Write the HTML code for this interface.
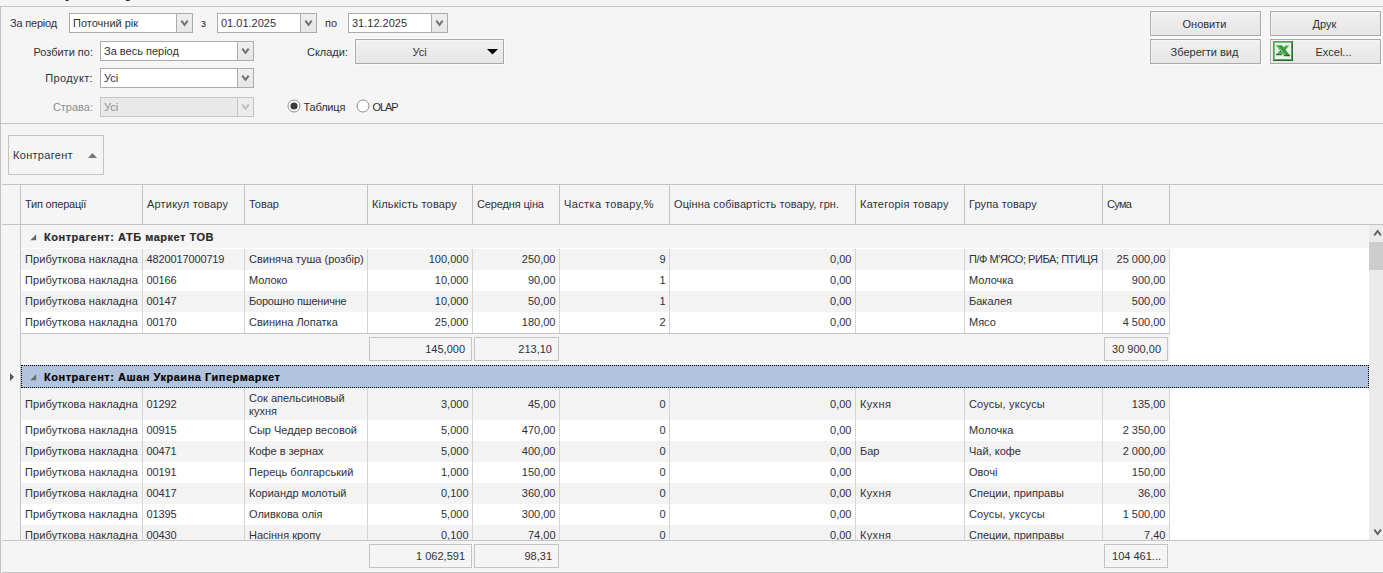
<!DOCTYPE html>
<html lang="uk"><head><meta charset="utf-8"><title>Звіт про закупівлі</title>
<style>
html,body{margin:0;padding:0;}
body{width:1383px;height:573px;overflow:hidden;position:relative;background:#f5f5f5;font-family:"Liberation Sans",sans-serif;font-size:11px;color:#30303a;}
div,span{box-sizing:border-box;}
.a{position:absolute;white-space:nowrap;}
.t{position:absolute;white-space:nowrap;line-height:13px;height:13px;}
.cb{position:absolute;height:20px;border:1px solid #ababab;background:#fff;}
.cb .tx{position:absolute;left:3px;top:3px;line-height:13px;}
.cb .dd{position:absolute;right:0;top:0;bottom:0;width:16px;border-left:1px solid #ababab;background:linear-gradient(#efefef,#e6e6e6);}
.cb .dd svg{position:absolute;left:3px;top:5px;}
.cb.dis{background:#e9e9e9;border-color:#c4c4c4;color:#8c8c8c;}
.cb.dis .dd{border-color:#c4c4c4;background:#ececec;}
.btn{position:absolute;border:1px solid #a8a8a8;background:linear-gradient(#f0f0f0,#e6e6e6);box-shadow:inset 1px 1px 0 0 rgba(255,255,255,.45),0 0 0 1px rgba(255,255,255,.55);text-align:center;}
.btn span{position:absolute;left:0;right:2px;text-align:center;line-height:13px;}
.hl{position:absolute;height:1px;background:#c4c4c4;}
.vl{position:absolute;width:1px;background:#c4c4c4;}
.hd{position:absolute;top:185px;height:39px;line-height:39px;padding-left:5px;white-space:nowrap;}
.row{position:absolute;left:21px;width:1148px;}
.c{position:absolute;top:0;height:100%;white-space:nowrap;overflow:hidden;}
.c span{position:absolute;left:4px;right:3.5px;line-height:13px;}
.c.r span{text-align:right;}
.c.k1 span{letter-spacing:0.1px;}
.c.k2 span{letter-spacing:-0.13px;left:3.5px;}
.grp{position:absolute;left:21px;width:1348px;height:23px;font-weight:bold;}
.grp .tx{position:absolute;left:23px;top:6px;line-height:13px;letter-spacing:0.52px;-webkit-text-stroke:0.2px currentColor;}
.sum{position:absolute;height:24px;border:1px solid #c4c4c4;background:#f5f5f5;}
.sum span{position:absolute;right:6px;top:5px;line-height:13px;}
</style></head><body>

<div class="a" style="left:6.4px;top:-20.6px;font-size:20px;font-weight:bold;line-height:23px;color:#222;">Звіт про закупівлі</div>
<div class="hl" style="left:0;top:6px;width:1383px;background:#c2c2c2"></div>
<div class="vl" style="left:0;top:6px;height:567px;background:#c2c2c2"></div>
<div class="t" style="left:10px;top:17px;letter-spacing:-0.2px">За період</div>
<div class="cb" style="left:69px;top:13px;width:124px;"><span class="tx">Поточний рік</span><span class="dd"><svg width="9" height="8" viewBox="0 0 9 8"><path d="M1.3 1.7 L4.5 5.9 L7.7 1.7" fill="none" stroke="#707070" stroke-width="2"/></svg></span></div>
<div class="t" style="left:201px;top:17px;">з</div>
<div class="cb" style="left:217px;top:13px;width:100px;"><span class="tx">01.01.2025</span><span class="dd"><svg width="9" height="8" viewBox="0 0 9 8"><path d="M1.3 1.7 L4.5 5.9 L7.7 1.7" fill="none" stroke="#707070" stroke-width="2"/></svg></span></div>
<div class="t" style="left:325px;top:17px;">по</div>
<div class="cb" style="left:348px;top:13px;width:100px;"><span class="tx">31.12.2025</span><span class="dd"><svg width="9" height="8" viewBox="0 0 9 8"><path d="M1.3 1.7 L4.5 5.9 L7.7 1.7" fill="none" stroke="#707070" stroke-width="2"/></svg></span></div>
<div class="t" style="left:0;width:93px;text-align:right;top:46px;">Розбити по:</div>
<div class="cb" style="left:100px;top:41px;width:154px;"><span class="tx">За весь період</span><span class="dd"><svg width="9" height="8" viewBox="0 0 9 8"><path d="M1.3 1.7 L4.5 5.9 L7.7 1.7" fill="none" stroke="#707070" stroke-width="2"/></svg></span></div>
<div class="t" style="left:250px;width:98px;text-align:right;top:46px;">Склади:</div>
<div class="btn" style="left:355px;top:39px;width:149px;height:25px;"><span style="top:6px;right:20px">Усі</span><svg style="position:absolute;right:5px;top:9px" width="11" height="6" viewBox="0 0 11 6"><path d="M0 0 H11 L5.5 5.5 Z" fill="#000"/></svg></div>
<div class="t" style="left:0;width:93px;text-align:right;top:72px;letter-spacing:0.35px">Продукт:</div>
<div class="cb" style="left:100px;top:68px;width:154px;"><span class="tx">Усі</span><span class="dd"><svg width="9" height="8" viewBox="0 0 9 8"><path d="M1.3 1.7 L4.5 5.9 L7.7 1.7" fill="none" stroke="#707070" stroke-width="2"/></svg></span></div>
<div class="t" style="left:0;width:93px;text-align:right;top:101px;color:#8c8c8c">Страва:</div>
<div class="cb dis" style="left:100px;top:97px;width:154px;"><span class="tx">Усі</span><span class="dd"><svg width="9" height="8" viewBox="0 0 9 8"><path d="M1.3 1.7 L4.5 5.9 L7.7 1.7" fill="none" stroke="#bdbdbd" stroke-width="2"/></svg></span></div>
<svg class="a" style="left:286.6px;top:99.4px" width="14" height="14" viewBox="0 0 14 14"><circle cx="7" cy="7" r="6" fill="#fff" stroke="#8e8e8e" stroke-width="1"/><circle cx="7" cy="7" r="3.6" fill="#3a3a3a"/></svg>
<div class="t" style="left:303.6px;top:101px;letter-spacing:-0.2px">Таблиця</div>
<svg class="a" style="left:355.6px;top:99.4px" width="14" height="14" viewBox="0 0 14 14"><circle cx="7" cy="7" r="6" fill="#fff" stroke="#8e8e8e" stroke-width="1"/></svg>
<div class="t" style="left:372.4px;top:101px;letter-spacing:-1.05px">OLAP</div>
<div class="btn" style="left:1150px;top:11px;width:111px;height:25px;"><span style="top:6px;">Оновити</span></div>
<div class="btn" style="left:1270px;top:11px;width:111px;height:25px;"><span style="top:6px;">Друк</span></div>
<div class="btn" style="left:1150px;top:39px;width:111px;height:25px;"><span style="top:6px;">Зберегти вид</span></div>
<div class="btn" style="left:1270px;top:39px;width:111px;height:25px;"><span style="top:6px;left:18px;">Excel...</span></div>
<svg class="a" style="left:1273px;top:41px" width="20" height="20" viewBox="0 0 20 20">
<rect x="0" y="0" width="20" height="20" fill="#2f6a2f"/>
<rect x="0" y="0" width="19" height="19" fill="#58a258"/>
<rect x="1" y="1" width="17" height="17" fill="#7dbb7d"/>
<rect x="2" y="2" width="16" height="16" fill="#fff"/>
<rect x="2.5" y="2.5" width="15" height="15" fill="#e6f2e6"/>
<path d="M12.4 4.4 H16.2 L8.6 13.6 H2.9 Z" fill="#55a855"/>
<path d="M2.8 4.3 H8.8 L17.2 14.6 H11 Z" fill="#3f983f"/>
<path d="M4.2 4.6 L12.6 14.4" stroke="#b4e2b4" stroke-width="0.8" fill="none"/>
<path d="M2.9 13.7 H8.6 M11 14.7 H17.2" stroke="#1d4d1d" stroke-width="1" fill="none"/>
</svg>
<div class="hl" style="left:1px;top:123px;width:1382px;"></div>
<div class="a" style="left:8px;top:135px;width:96px;height:40px;border:1px solid #c4c4c4;background:#f5f5f5;"><span class="t" style="left:4px;top:13px;letter-spacing:0.3px">Контрагент</span><svg style="position:absolute;left:79px;top:17px" width="9" height="5" viewBox="0 0 9 5"><path d="M0 5 L4.5 0 L9 5 Z" fill="#777"/></svg></div>
<div class="hl" style="left:2px;top:184px;width:1381px;"></div>
<div class="hl" style="left:2px;top:224px;width:1381px;"></div>
<div class="vl" style="left:20px;top:184px;height:357px;"></div>
<div class="hd" style="left:20px;width:122px;letter-spacing:-0.2px">Тип операції</div>
<div class="vl" style="left:142px;top:185px;height:39px;"></div>
<div class="hd" style="left:142px;width:102px;letter-spacing:0.2px">Артикул товару</div>
<div class="vl" style="left:244px;top:185px;height:39px;"></div>
<div class="hd" style="left:244px;width:123px;letter-spacing:0px">Товар</div>
<div class="vl" style="left:367px;top:185px;height:39px;"></div>
<div class="hd" style="left:367px;width:105px;letter-spacing:0.19px">Кількість товару</div>
<div class="vl" style="left:472px;top:185px;height:39px;"></div>
<div class="hd" style="left:472px;width:87px;letter-spacing:-0.14px">Середня ціна</div>
<div class="vl" style="left:559px;top:185px;height:39px;"></div>
<div class="hd" style="left:559px;width:110px;letter-spacing:0.38px">Частка товару,%</div>
<div class="vl" style="left:669px;top:185px;height:39px;"></div>
<div class="hd" style="left:669px;width:186px;letter-spacing:0.09px">Оцінна собівартість товару, грн.</div>
<div class="vl" style="left:855px;top:185px;height:39px;"></div>
<div class="hd" style="left:855px;width:109px;letter-spacing:0.22px">Категорія товару</div>
<div class="vl" style="left:964px;top:185px;height:39px;"></div>
<div class="hd" style="left:964px;width:138px;letter-spacing:0.12px">Група товару</div>
<div class="vl" style="left:1102px;top:185px;height:39px;"></div>
<div class="hd" style="left:1102px;width:67px;letter-spacing:-0.7px">Сума</div>
<div class="vl" style="left:1169px;top:185px;height:39px;"></div>
<div class="a" style="left:21px;top:248px;width:1348px;height:292px;background:#fff;"></div>
<div class="grp" style="top:225px;background:#f5f5f5;color:#2a2a2a;"><svg style="position:absolute;left:8.5px;top:9px" width="7" height="7" viewBox="0 0 7 7"><path d="M6.2 0.3 V6.2 H0.3 Z" fill="#6a6a6a"/></svg><span class="tx" style="">Контрагент: АТБ маркет ТОВ</span></div>
<div class="row" style="top:249px;height:21px;background:#f3f3f3;">
<div class="c k1" style="left:0px;width:121px;"><span style="top:4px">Прибуткова накладна</span></div>
<div class="c k2" style="left:122px;width:101px;"><span style="top:4px">4820017000719</span></div>
<div class="c" style="left:224px;width:122px;"><span style="top:4px">Свиняча туша (розбір)</span></div>
<div class="c r" style="left:347px;width:104px;"><span style="top:4px">100,000</span></div>
<div class="c r" style="left:452px;width:86px;"><span style="top:4px">250,00</span></div>
<div class="c r" style="left:539px;width:109px;"><span style="top:4px">9</span></div>
<div class="c r" style="left:649px;width:185px;"><span style="top:4px">0,00</span></div>
<div class="c" style="left:835px;width:108px;"><span style="top:4px"></span></div>
<div class="c" style="left:944px;width:137px;"><span style="top:4px;letter-spacing:-0.44px">П/Ф М'ЯСО; РИБА; ПТИЦЯ</span></div>
<div class="c r" style="left:1082px;width:66px;"><span style="top:4px">25 000,00</span></div>
</div>
<div class="vl" style="left:142px;top:249px;height:21px;background:#d4d4d4"></div>
<div class="vl" style="left:244px;top:249px;height:21px;background:#d4d4d4"></div>
<div class="vl" style="left:367px;top:249px;height:21px;background:#d4d4d4"></div>
<div class="vl" style="left:472px;top:249px;height:21px;background:#d4d4d4"></div>
<div class="vl" style="left:559px;top:249px;height:21px;background:#d4d4d4"></div>
<div class="vl" style="left:669px;top:249px;height:21px;background:#d4d4d4"></div>
<div class="vl" style="left:855px;top:249px;height:21px;background:#d4d4d4"></div>
<div class="vl" style="left:964px;top:249px;height:21px;background:#d4d4d4"></div>
<div class="vl" style="left:1102px;top:249px;height:21px;background:#d4d4d4"></div>
<div class="vl" style="left:1169px;top:249px;height:21px;background:#d4d4d4"></div>
<div class="row" style="top:270px;height:21px;background:#fff;">
<div class="c k1" style="left:0px;width:121px;"><span style="top:4px">Прибуткова накладна</span></div>
<div class="c k2" style="left:122px;width:101px;"><span style="top:4px">00166</span></div>
<div class="c" style="left:224px;width:122px;"><span style="top:4px;letter-spacing:-0.1px">Молоко</span></div>
<div class="c r" style="left:347px;width:104px;"><span style="top:4px">10,000</span></div>
<div class="c r" style="left:452px;width:86px;"><span style="top:4px">90,00</span></div>
<div class="c r" style="left:539px;width:109px;"><span style="top:4px">1</span></div>
<div class="c r" style="left:649px;width:185px;"><span style="top:4px">0,00</span></div>
<div class="c" style="left:835px;width:108px;"><span style="top:4px"></span></div>
<div class="c" style="left:944px;width:137px;"><span style="top:4px">Молочка</span></div>
<div class="c r" style="left:1082px;width:66px;"><span style="top:4px">900,00</span></div>
</div>
<div class="vl" style="left:142px;top:270px;height:21px;background:#d4d4d4"></div>
<div class="vl" style="left:244px;top:270px;height:21px;background:#d4d4d4"></div>
<div class="vl" style="left:367px;top:270px;height:21px;background:#d4d4d4"></div>
<div class="vl" style="left:472px;top:270px;height:21px;background:#d4d4d4"></div>
<div class="vl" style="left:559px;top:270px;height:21px;background:#d4d4d4"></div>
<div class="vl" style="left:669px;top:270px;height:21px;background:#d4d4d4"></div>
<div class="vl" style="left:855px;top:270px;height:21px;background:#d4d4d4"></div>
<div class="vl" style="left:964px;top:270px;height:21px;background:#d4d4d4"></div>
<div class="vl" style="left:1102px;top:270px;height:21px;background:#d4d4d4"></div>
<div class="vl" style="left:1169px;top:270px;height:21px;background:#d4d4d4"></div>
<div class="row" style="top:291px;height:21px;background:#f3f3f3;">
<div class="c k1" style="left:0px;width:121px;"><span style="top:4px">Прибуткова накладна</span></div>
<div class="c k2" style="left:122px;width:101px;"><span style="top:4px">00147</span></div>
<div class="c" style="left:224px;width:122px;"><span style="top:4px;letter-spacing:-0.2px">Борошно пшеничне</span></div>
<div class="c r" style="left:347px;width:104px;"><span style="top:4px">10,000</span></div>
<div class="c r" style="left:452px;width:86px;"><span style="top:4px">50,00</span></div>
<div class="c r" style="left:539px;width:109px;"><span style="top:4px">1</span></div>
<div class="c r" style="left:649px;width:185px;"><span style="top:4px">0,00</span></div>
<div class="c" style="left:835px;width:108px;"><span style="top:4px"></span></div>
<div class="c" style="left:944px;width:137px;"><span style="top:4px">Бакалея</span></div>
<div class="c r" style="left:1082px;width:66px;"><span style="top:4px">500,00</span></div>
</div>
<div class="vl" style="left:142px;top:291px;height:21px;background:#d4d4d4"></div>
<div class="vl" style="left:244px;top:291px;height:21px;background:#d4d4d4"></div>
<div class="vl" style="left:367px;top:291px;height:21px;background:#d4d4d4"></div>
<div class="vl" style="left:472px;top:291px;height:21px;background:#d4d4d4"></div>
<div class="vl" style="left:559px;top:291px;height:21px;background:#d4d4d4"></div>
<div class="vl" style="left:669px;top:291px;height:21px;background:#d4d4d4"></div>
<div class="vl" style="left:855px;top:291px;height:21px;background:#d4d4d4"></div>
<div class="vl" style="left:964px;top:291px;height:21px;background:#d4d4d4"></div>
<div class="vl" style="left:1102px;top:291px;height:21px;background:#d4d4d4"></div>
<div class="vl" style="left:1169px;top:291px;height:21px;background:#d4d4d4"></div>
<div class="row" style="top:312px;height:21px;background:#fff;">
<div class="c k1" style="left:0px;width:121px;"><span style="top:4px">Прибуткова накладна</span></div>
<div class="c k2" style="left:122px;width:101px;"><span style="top:4px">00170</span></div>
<div class="c" style="left:224px;width:122px;"><span style="top:4px">Свинина Лопатка</span></div>
<div class="c r" style="left:347px;width:104px;"><span style="top:4px">25,000</span></div>
<div class="c r" style="left:452px;width:86px;"><span style="top:4px">180,00</span></div>
<div class="c r" style="left:539px;width:109px;"><span style="top:4px">2</span></div>
<div class="c r" style="left:649px;width:185px;"><span style="top:4px">0,00</span></div>
<div class="c" style="left:835px;width:108px;"><span style="top:4px"></span></div>
<div class="c" style="left:944px;width:137px;"><span style="top:4px">Мясо</span></div>
<div class="c r" style="left:1082px;width:66px;"><span style="top:4px">4 500,00</span></div>
</div>
<div class="vl" style="left:142px;top:312px;height:21px;background:#d4d4d4"></div>
<div class="vl" style="left:244px;top:312px;height:21px;background:#d4d4d4"></div>
<div class="vl" style="left:367px;top:312px;height:21px;background:#d4d4d4"></div>
<div class="vl" style="left:472px;top:312px;height:21px;background:#d4d4d4"></div>
<div class="vl" style="left:559px;top:312px;height:21px;background:#d4d4d4"></div>
<div class="vl" style="left:669px;top:312px;height:21px;background:#d4d4d4"></div>
<div class="vl" style="left:855px;top:312px;height:21px;background:#d4d4d4"></div>
<div class="vl" style="left:964px;top:312px;height:21px;background:#d4d4d4"></div>
<div class="vl" style="left:1102px;top:312px;height:21px;background:#d4d4d4"></div>
<div class="vl" style="left:1169px;top:312px;height:21px;background:#d4d4d4"></div>
<div class="a" style="left:21px;top:333px;width:1149px;height:32px;background:#f5f5f5;border-top:1px solid #c4c4c4;"></div>
<div class="a" style="left:21px;top:364px;width:1149px;height:1px;background:#fafafa;"></div>
<div class="sum" style="left:369px;top:337px;width:103px;"><span>145,000</span></div>
<div class="sum" style="left:474px;top:337px;width:85px;"><span>213,10</span></div>
<div class="sum" style="left:1104px;top:337px;width:64px;"><span>30 900,00</span></div>
<div class="grp" style="top:365px;background:#b0c4de;border:1px dotted #000;color:#000;"><svg style="position:absolute;left:7.5px;top:8px" width="7" height="7" viewBox="0 0 7 7"><path d="M6.2 0.3 V6.2 H0.3 Z" fill="#6a6a6a"/></svg><span class="tx" style="left:22px;top:5px;">Контрагент: Ашан Украина Гипермаркет</span></div>
<svg class="a" style="left:10px;top:373px" width="4" height="8" viewBox="0 0 4 8"><path d="M0 0 L4 4 L0 8 Z" fill="#555"/></svg>
<div class="row" style="top:388px;height:32px;background:#f3f3f3;">
<div class="c k1" style="left:0px;width:121px;"><span style="top:10px">Прибуткова накладна</span></div>
<div class="c k2" style="left:122px;width:101px;"><span style="top:10px">01292</span></div>
<div class="c" style="left:224px;width:122px;"><span style="top:4px">Сок апельсиновый<br>кухня</span></div>
<div class="c r" style="left:347px;width:104px;"><span style="top:10px">3,000</span></div>
<div class="c r" style="left:452px;width:86px;"><span style="top:10px">45,00</span></div>
<div class="c r" style="left:539px;width:109px;"><span style="top:10px">0</span></div>
<div class="c r" style="left:649px;width:185px;"><span style="top:10px">0,00</span></div>
<div class="c" style="left:835px;width:108px;"><span style="top:10px;letter-spacing:0.35px">Кухня</span></div>
<div class="c" style="left:944px;width:137px;"><span style="top:10px;letter-spacing:0.18px">Соусы, уксусы</span></div>
<div class="c r" style="left:1082px;width:66px;"><span style="top:10px">135,00</span></div>
</div>
<div class="vl" style="left:142px;top:388px;height:32px;background:#d4d4d4"></div>
<div class="vl" style="left:244px;top:388px;height:32px;background:#d4d4d4"></div>
<div class="vl" style="left:367px;top:388px;height:32px;background:#d4d4d4"></div>
<div class="vl" style="left:472px;top:388px;height:32px;background:#d4d4d4"></div>
<div class="vl" style="left:559px;top:388px;height:32px;background:#d4d4d4"></div>
<div class="vl" style="left:669px;top:388px;height:32px;background:#d4d4d4"></div>
<div class="vl" style="left:855px;top:388px;height:32px;background:#d4d4d4"></div>
<div class="vl" style="left:964px;top:388px;height:32px;background:#d4d4d4"></div>
<div class="vl" style="left:1102px;top:388px;height:32px;background:#d4d4d4"></div>
<div class="vl" style="left:1169px;top:388px;height:32px;background:#d4d4d4"></div>
<div class="row" style="top:420px;height:21px;background:#fff;">
<div class="c k1" style="left:0px;width:121px;"><span style="top:4px">Прибуткова накладна</span></div>
<div class="c k2" style="left:122px;width:101px;"><span style="top:4px">00915</span></div>
<div class="c" style="left:224px;width:122px;"><span style="top:4px">Сыр Чеддер весовой</span></div>
<div class="c r" style="left:347px;width:104px;"><span style="top:4px">5,000</span></div>
<div class="c r" style="left:452px;width:86px;"><span style="top:4px">470,00</span></div>
<div class="c r" style="left:539px;width:109px;"><span style="top:4px">0</span></div>
<div class="c r" style="left:649px;width:185px;"><span style="top:4px">0,00</span></div>
<div class="c" style="left:835px;width:108px;"><span style="top:4px"></span></div>
<div class="c" style="left:944px;width:137px;"><span style="top:4px">Молочка</span></div>
<div class="c r" style="left:1082px;width:66px;"><span style="top:4px">2 350,00</span></div>
</div>
<div class="vl" style="left:142px;top:420px;height:21px;background:#d4d4d4"></div>
<div class="vl" style="left:244px;top:420px;height:21px;background:#d4d4d4"></div>
<div class="vl" style="left:367px;top:420px;height:21px;background:#d4d4d4"></div>
<div class="vl" style="left:472px;top:420px;height:21px;background:#d4d4d4"></div>
<div class="vl" style="left:559px;top:420px;height:21px;background:#d4d4d4"></div>
<div class="vl" style="left:669px;top:420px;height:21px;background:#d4d4d4"></div>
<div class="vl" style="left:855px;top:420px;height:21px;background:#d4d4d4"></div>
<div class="vl" style="left:964px;top:420px;height:21px;background:#d4d4d4"></div>
<div class="vl" style="left:1102px;top:420px;height:21px;background:#d4d4d4"></div>
<div class="vl" style="left:1169px;top:420px;height:21px;background:#d4d4d4"></div>
<div class="row" style="top:441px;height:21px;background:#f3f3f3;">
<div class="c k1" style="left:0px;width:121px;"><span style="top:4px">Прибуткова накладна</span></div>
<div class="c k2" style="left:122px;width:101px;"><span style="top:4px">00471</span></div>
<div class="c" style="left:224px;width:122px;"><span style="top:4px">Кофе в зернах</span></div>
<div class="c r" style="left:347px;width:104px;"><span style="top:4px">5,000</span></div>
<div class="c r" style="left:452px;width:86px;"><span style="top:4px">400,00</span></div>
<div class="c r" style="left:539px;width:109px;"><span style="top:4px">0</span></div>
<div class="c r" style="left:649px;width:185px;"><span style="top:4px">0,00</span></div>
<div class="c" style="left:835px;width:108px;"><span style="top:4px">Бар</span></div>
<div class="c" style="left:944px;width:137px;"><span style="top:4px">Чай, кофе</span></div>
<div class="c r" style="left:1082px;width:66px;"><span style="top:4px">2 000,00</span></div>
</div>
<div class="vl" style="left:142px;top:441px;height:21px;background:#d4d4d4"></div>
<div class="vl" style="left:244px;top:441px;height:21px;background:#d4d4d4"></div>
<div class="vl" style="left:367px;top:441px;height:21px;background:#d4d4d4"></div>
<div class="vl" style="left:472px;top:441px;height:21px;background:#d4d4d4"></div>
<div class="vl" style="left:559px;top:441px;height:21px;background:#d4d4d4"></div>
<div class="vl" style="left:669px;top:441px;height:21px;background:#d4d4d4"></div>
<div class="vl" style="left:855px;top:441px;height:21px;background:#d4d4d4"></div>
<div class="vl" style="left:964px;top:441px;height:21px;background:#d4d4d4"></div>
<div class="vl" style="left:1102px;top:441px;height:21px;background:#d4d4d4"></div>
<div class="vl" style="left:1169px;top:441px;height:21px;background:#d4d4d4"></div>
<div class="row" style="top:462px;height:21px;background:#fff;">
<div class="c k1" style="left:0px;width:121px;"><span style="top:4px">Прибуткова накладна</span></div>
<div class="c k2" style="left:122px;width:101px;"><span style="top:4px">00191</span></div>
<div class="c" style="left:224px;width:122px;"><span style="top:4px">Перець болгарський</span></div>
<div class="c r" style="left:347px;width:104px;"><span style="top:4px">1,000</span></div>
<div class="c r" style="left:452px;width:86px;"><span style="top:4px">150,00</span></div>
<div class="c r" style="left:539px;width:109px;"><span style="top:4px">0</span></div>
<div class="c r" style="left:649px;width:185px;"><span style="top:4px">0,00</span></div>
<div class="c" style="left:835px;width:108px;"><span style="top:4px"></span></div>
<div class="c" style="left:944px;width:137px;"><span style="top:4px">Овочі</span></div>
<div class="c r" style="left:1082px;width:66px;"><span style="top:4px">150,00</span></div>
</div>
<div class="vl" style="left:142px;top:462px;height:21px;background:#d4d4d4"></div>
<div class="vl" style="left:244px;top:462px;height:21px;background:#d4d4d4"></div>
<div class="vl" style="left:367px;top:462px;height:21px;background:#d4d4d4"></div>
<div class="vl" style="left:472px;top:462px;height:21px;background:#d4d4d4"></div>
<div class="vl" style="left:559px;top:462px;height:21px;background:#d4d4d4"></div>
<div class="vl" style="left:669px;top:462px;height:21px;background:#d4d4d4"></div>
<div class="vl" style="left:855px;top:462px;height:21px;background:#d4d4d4"></div>
<div class="vl" style="left:964px;top:462px;height:21px;background:#d4d4d4"></div>
<div class="vl" style="left:1102px;top:462px;height:21px;background:#d4d4d4"></div>
<div class="vl" style="left:1169px;top:462px;height:21px;background:#d4d4d4"></div>
<div class="row" style="top:483px;height:21px;background:#f3f3f3;">
<div class="c k1" style="left:0px;width:121px;"><span style="top:4px">Прибуткова накладна</span></div>
<div class="c k2" style="left:122px;width:101px;"><span style="top:4px">00417</span></div>
<div class="c" style="left:224px;width:122px;"><span style="top:4px">Кориандр молотый</span></div>
<div class="c r" style="left:347px;width:104px;"><span style="top:4px">0,100</span></div>
<div class="c r" style="left:452px;width:86px;"><span style="top:4px">360,00</span></div>
<div class="c r" style="left:539px;width:109px;"><span style="top:4px">0</span></div>
<div class="c r" style="left:649px;width:185px;"><span style="top:4px">0,00</span></div>
<div class="c" style="left:835px;width:108px;"><span style="top:4px;letter-spacing:0.35px">Кухня</span></div>
<div class="c" style="left:944px;width:137px;"><span style="top:4px">Специи, приправы</span></div>
<div class="c r" style="left:1082px;width:66px;"><span style="top:4px">36,00</span></div>
</div>
<div class="vl" style="left:142px;top:483px;height:21px;background:#d4d4d4"></div>
<div class="vl" style="left:244px;top:483px;height:21px;background:#d4d4d4"></div>
<div class="vl" style="left:367px;top:483px;height:21px;background:#d4d4d4"></div>
<div class="vl" style="left:472px;top:483px;height:21px;background:#d4d4d4"></div>
<div class="vl" style="left:559px;top:483px;height:21px;background:#d4d4d4"></div>
<div class="vl" style="left:669px;top:483px;height:21px;background:#d4d4d4"></div>
<div class="vl" style="left:855px;top:483px;height:21px;background:#d4d4d4"></div>
<div class="vl" style="left:964px;top:483px;height:21px;background:#d4d4d4"></div>
<div class="vl" style="left:1102px;top:483px;height:21px;background:#d4d4d4"></div>
<div class="vl" style="left:1169px;top:483px;height:21px;background:#d4d4d4"></div>
<div class="row" style="top:504px;height:21px;background:#fff;">
<div class="c k1" style="left:0px;width:121px;"><span style="top:4px">Прибуткова накладна</span></div>
<div class="c k2" style="left:122px;width:101px;"><span style="top:4px">01395</span></div>
<div class="c" style="left:224px;width:122px;"><span style="top:4px">Оливкова олія</span></div>
<div class="c r" style="left:347px;width:104px;"><span style="top:4px">5,000</span></div>
<div class="c r" style="left:452px;width:86px;"><span style="top:4px">300,00</span></div>
<div class="c r" style="left:539px;width:109px;"><span style="top:4px">0</span></div>
<div class="c r" style="left:649px;width:185px;"><span style="top:4px">0,00</span></div>
<div class="c" style="left:835px;width:108px;"><span style="top:4px"></span></div>
<div class="c" style="left:944px;width:137px;"><span style="top:4px;letter-spacing:0.18px">Соусы, уксусы</span></div>
<div class="c r" style="left:1082px;width:66px;"><span style="top:4px">1 500,00</span></div>
</div>
<div class="vl" style="left:142px;top:504px;height:21px;background:#d4d4d4"></div>
<div class="vl" style="left:244px;top:504px;height:21px;background:#d4d4d4"></div>
<div class="vl" style="left:367px;top:504px;height:21px;background:#d4d4d4"></div>
<div class="vl" style="left:472px;top:504px;height:21px;background:#d4d4d4"></div>
<div class="vl" style="left:559px;top:504px;height:21px;background:#d4d4d4"></div>
<div class="vl" style="left:669px;top:504px;height:21px;background:#d4d4d4"></div>
<div class="vl" style="left:855px;top:504px;height:21px;background:#d4d4d4"></div>
<div class="vl" style="left:964px;top:504px;height:21px;background:#d4d4d4"></div>
<div class="vl" style="left:1102px;top:504px;height:21px;background:#d4d4d4"></div>
<div class="vl" style="left:1169px;top:504px;height:21px;background:#d4d4d4"></div>
<div class="row" style="top:525px;height:21px;background:#f3f3f3;">
<div class="c k1" style="left:0px;width:121px;"><span style="top:4px">Прибуткова накладна</span></div>
<div class="c k2" style="left:122px;width:101px;"><span style="top:4px">00430</span></div>
<div class="c" style="left:224px;width:122px;"><span style="top:4px">Насіння кропу</span></div>
<div class="c r" style="left:347px;width:104px;"><span style="top:4px">0,100</span></div>
<div class="c r" style="left:452px;width:86px;"><span style="top:4px">74,00</span></div>
<div class="c r" style="left:539px;width:109px;"><span style="top:4px">0</span></div>
<div class="c r" style="left:649px;width:185px;"><span style="top:4px">0,00</span></div>
<div class="c" style="left:835px;width:108px;"><span style="top:4px;letter-spacing:0.35px">Кухня</span></div>
<div class="c" style="left:944px;width:137px;"><span style="top:4px">Специи, приправы</span></div>
<div class="c r" style="left:1082px;width:66px;"><span style="top:4px">7,40</span></div>
</div>
<div class="vl" style="left:142px;top:525px;height:21px;background:#d4d4d4"></div>
<div class="vl" style="left:244px;top:525px;height:21px;background:#d4d4d4"></div>
<div class="vl" style="left:367px;top:525px;height:21px;background:#d4d4d4"></div>
<div class="vl" style="left:472px;top:525px;height:21px;background:#d4d4d4"></div>
<div class="vl" style="left:559px;top:525px;height:21px;background:#d4d4d4"></div>
<div class="vl" style="left:669px;top:525px;height:21px;background:#d4d4d4"></div>
<div class="vl" style="left:855px;top:525px;height:21px;background:#d4d4d4"></div>
<div class="vl" style="left:964px;top:525px;height:21px;background:#d4d4d4"></div>
<div class="vl" style="left:1102px;top:525px;height:21px;background:#d4d4d4"></div>
<div class="vl" style="left:1169px;top:525px;height:21px;background:#d4d4d4"></div>
<div class="a" style="left:2px;top:540px;width:1381px;height:33px;background:#f5f5f5;border-top:1px solid #c4c4c4;"></div>
<div class="hl" style="left:2px;top:572px;width:1381px;"></div>
<div class="sum" style="left:369px;top:544px;width:103px;"><span>1 062,591</span></div>
<div class="sum" style="left:474px;top:544px;width:85px;"><span>98,31</span></div>
<div class="sum" style="left:1104px;top:544px;width:64px;"><span>104 461...</span></div>
<div class="a" style="left:1369px;top:225px;width:14px;height:315px;background:#ebebeb;"></div>
<div class="a" style="left:1369px;top:242px;width:14px;height:28px;background:#cdcdcd;"></div>
<svg class="a" style="left:1373px;top:229px" width="9" height="8" viewBox="0 0 9 8"><path d="M1.3 6.3 L4.6 2 L7.9 6.3" fill="none" stroke="#606060" stroke-width="1.9"/></svg>
<svg class="a" style="left:1373px;top:528px" width="9" height="8" viewBox="0 0 9 8"><path d="M1.3 1.7 L4.6 6 L7.9 1.7" fill="none" stroke="#606060" stroke-width="1.9"/></svg>
</body></html>
